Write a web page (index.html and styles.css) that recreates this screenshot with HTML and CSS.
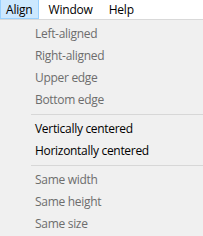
FILE: index.html
```html
<!DOCTYPE html>
<html lang="en">
<head>
  <meta charset="UTF-8" />
  <title>Align menu</title>
  <link rel="stylesheet" href="styles.css">
</head>
<body>
  <div class="menubar">
    <span class="menubar-item open">Align</span>
    <span class="menubar-item">Window</span>
    <span class="menubar-item">Help</span>
  </div>

  <div class="dropdown">
    <div class="item disabled">Left-aligned</div>
    <div class="item disabled">Right-aligned</div>
    <div class="item disabled">Upper edge</div>
    <div class="item disabled">Bottom edge</div>
    <div class="separator"></div>
    <div class="item">Vertically centered</div>
    <div class="item">Horizontally centered</div>
    <div class="separator"></div>
    <div class="item disabled">Same width</div>
    <div class="item disabled">Same height</div>
    <div class="item disabled">Same size</div>
  </div>
</body>
</html>
```

FILE: styles.css
```css
body {
  margin: 0;
  background: #f0f0f0;
  font-family: "Open Sans", "Noto Sans", sans-serif;
  font-size: 12px;
  color: #000;
  overflow: hidden;
}
.menubar {
  display: flex;
  gap: 4px;
  height: 19px;
  background: #ffffff;
  border-bottom: 1px solid #d9d9d9;
}
.menubar-item {
  display: flex;
  align-items: center;
  padding: 0 5px;
  border: 1px solid transparent;
  letter-spacing: -0.2px;
}
.menubar-item.open {
  background: #cce8ff;
  border-color: #99d1ff;
  border-top: none;
}
.dropdown {
  padding-top: 3px;
}
.item {
  height: 22px;
  line-height: 22px;
  padding-left: 35px;
  letter-spacing: -0.3px;
}
.item.disabled {
  color: #6d6d6d;
}
.separator {
  height: 1px;
  background: #d7d7d7;
  margin: 3px 0 3px 31px;
}
```
